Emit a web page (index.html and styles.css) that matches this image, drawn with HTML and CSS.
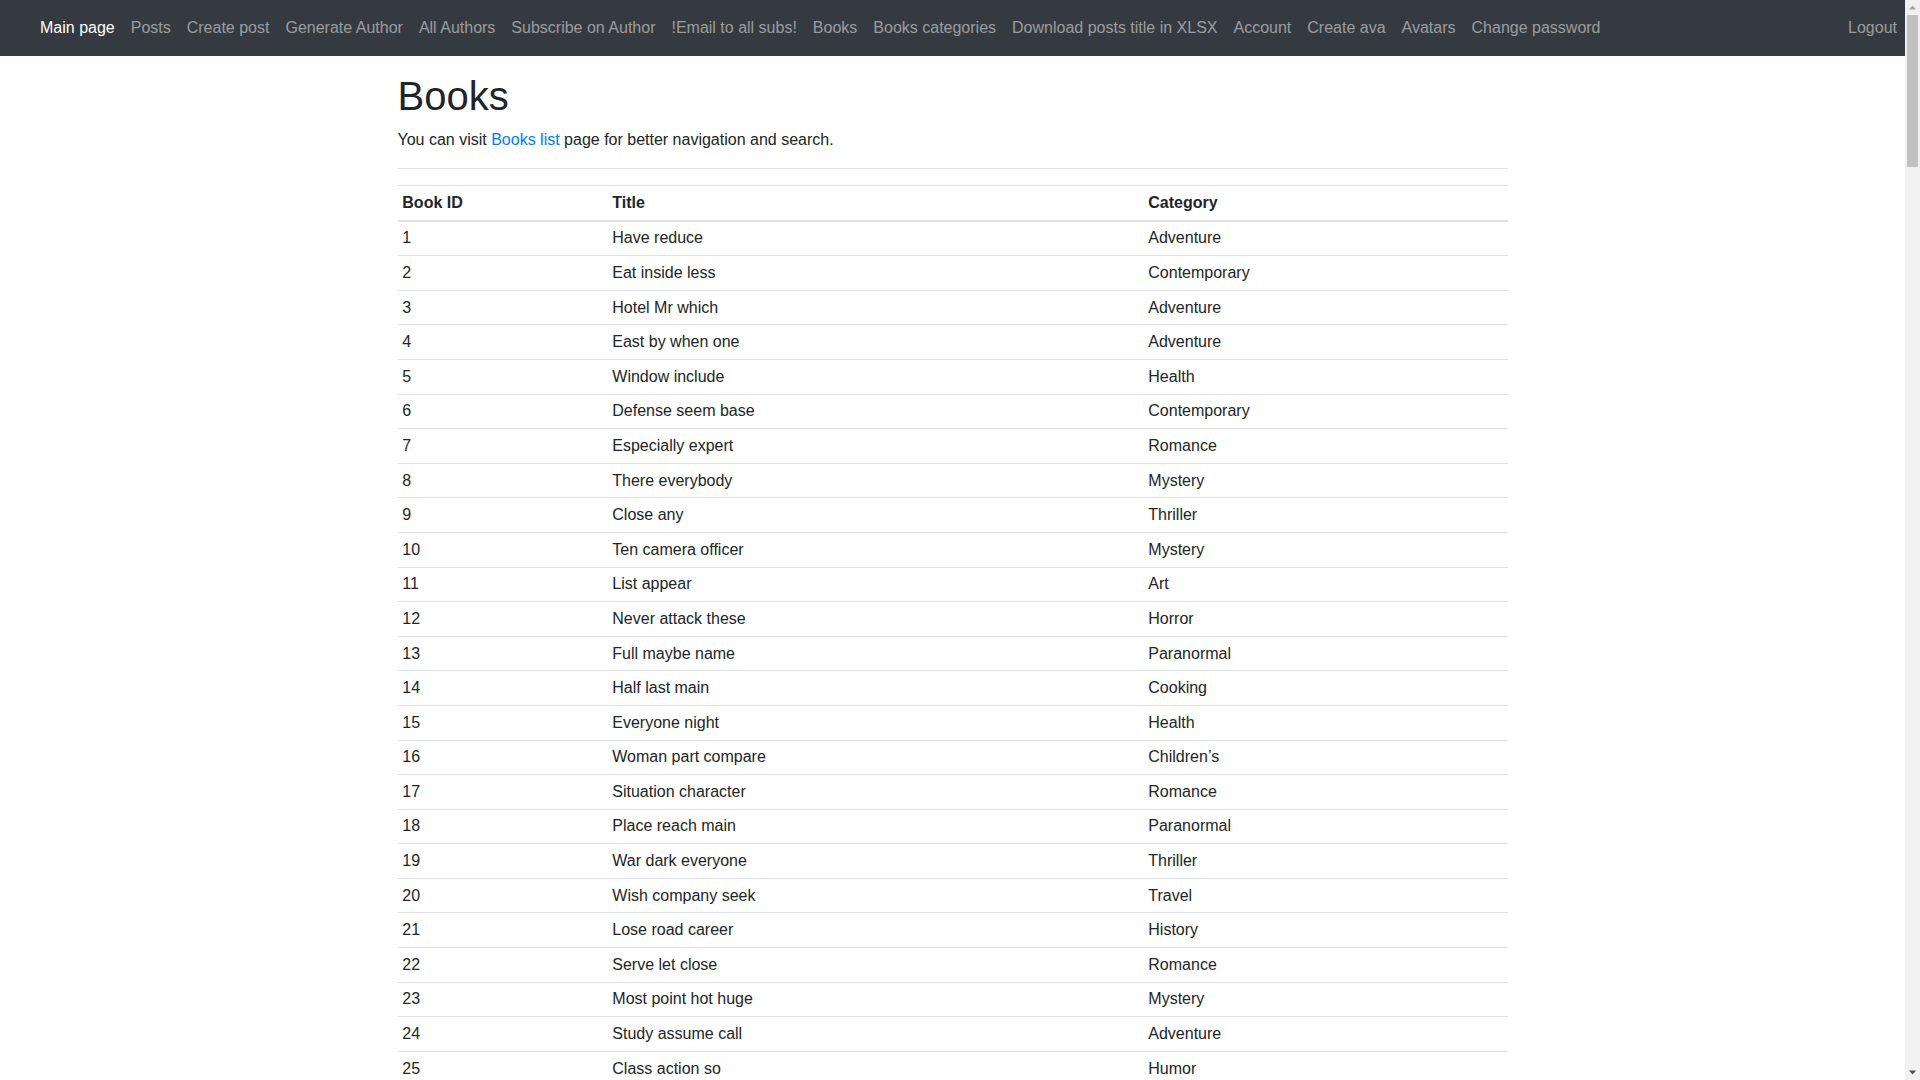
FILE: index.html
```html
<!DOCTYPE html>
<html lang="en">
<head>
<meta charset="utf-8">
<title>Books</title>
<link rel="stylesheet" href="styles.css">
</head>
<body>
<nav class="navbar">
  <ul class="nav-list">
    <li><a class="nav-link active" href="#">Main page</a></li>
    <li><a class="nav-link" href="#">Posts</a></li>
    <li><a class="nav-link" href="#">Create post</a></li>
    <li><a class="nav-link" href="#">Generate Author</a></li>
    <li><a class="nav-link" href="#">All Authors</a></li>
    <li><a class="nav-link" href="#">Subscribe on Author</a></li>
    <li><a class="nav-link" href="#">!Email to all subs!</a></li>
    <li><a class="nav-link" href="#">Books</a></li>
    <li><a class="nav-link" href="#">Books categories</a></li>
    <li><a class="nav-link" href="#">Download posts title in XLSX</a></li>
    <li><a class="nav-link" href="#">Account</a></li>
    <li><a class="nav-link" href="#">Create ava</a></li>
    <li><a class="nav-link" href="#">Avatars</a></li>
    <li><a class="nav-link" href="#">Change password</a></li>
  </ul>
  <ul class="nav-list nav-right">
    <li><a class="nav-link" href="#">Logout</a></li>
  </ul>
</nav>
<main class="container">
  <h1 class="title">Books</h1>
  <p class="lead-text">You can visit <a class="link" href="#">Books list</a> page for better navigation and search.</p>
  <hr class="divider">
  <table class="table">
    <thead>
      <tr><th class="col-id">Book ID</th><th class="col-title">Title</th><th>Category</th></tr>
    </thead>
    <tbody>
      <tr><td>1</td><td>Have reduce</td><td>Adventure</td></tr>
      <tr><td>2</td><td>Eat inside less</td><td>Contemporary</td></tr>
      <tr><td>3</td><td>Hotel Mr which</td><td>Adventure</td></tr>
      <tr><td>4</td><td>East by when one</td><td>Adventure</td></tr>
      <tr><td>5</td><td>Window include</td><td>Health</td></tr>
      <tr><td>6</td><td>Defense seem base</td><td>Contemporary</td></tr>
      <tr><td>7</td><td>Especially expert</td><td>Romance</td></tr>
      <tr><td>8</td><td>There everybody</td><td>Mystery</td></tr>
      <tr><td>9</td><td>Close any</td><td>Thriller</td></tr>
      <tr><td>10</td><td>Ten camera officer</td><td>Mystery</td></tr>
      <tr><td>11</td><td>List appear</td><td>Art</td></tr>
      <tr><td>12</td><td>Never attack these</td><td>Horror</td></tr>
      <tr><td>13</td><td>Full maybe name</td><td>Paranormal</td></tr>
      <tr><td>14</td><td>Half last main</td><td>Cooking</td></tr>
      <tr><td>15</td><td>Everyone night</td><td>Health</td></tr>
      <tr><td>16</td><td>Woman part compare</td><td>Children’s</td></tr>
      <tr><td>17</td><td>Situation character</td><td>Romance</td></tr>
      <tr><td>18</td><td>Place reach main</td><td>Paranormal</td></tr>
      <tr><td>19</td><td>War dark everyone</td><td>Thriller</td></tr>
      <tr><td>20</td><td>Wish company seek</td><td>Travel</td></tr>
      <tr><td>21</td><td>Lose road career</td><td>History</td></tr>
      <tr><td>22</td><td>Serve let close</td><td>Romance</td></tr>
      <tr><td>23</td><td>Most point hot huge</td><td>Mystery</td></tr>
      <tr><td>24</td><td>Study assume call</td><td>Adventure</td></tr>
      <tr><td>25</td><td>Class action so</td><td>Humor</td></tr>
    </tbody>
  </table>
</main>
<div class="scrollbar" aria-hidden="true">
  <div class="sb-button"><svg width="15" height="15" viewBox="0 0 15 15"><polygon points="4,9.5 11,9.5 7.5,5.5" fill="#a3a3a3"/></svg></div>
  <div class="sb-track"><div class="sb-thumb"></div></div>
  <div class="sb-button"><svg width="15" height="15" viewBox="0 0 15 15"><polygon points="4,5.5 11,5.5 7.5,9.5" fill="#505050"/></svg></div>
</div>
</body>
</html>
```

FILE: styles.css
```css
* { box-sizing: border-box; }
html, body { margin: 0; padding: 0; }
body {
  font-family: "Liberation Sans", Arial, sans-serif;
  font-size: 16px;
  line-height: 1.5;
  color: #212529;
  background: #fff;
  margin-right: 15px;
}
.scrollbar {
  position: fixed;
  top: 0;
  right: 0;
  width: 15px;
  height: 100vh;
  background: #f1f1f1;
  display: flex;
  flex-direction: column;
}
.sb-button { height: 15px; flex: none; }
.sb-button svg { display: block; }
.sb-track { flex: 1; padding: 0 2px; }
.sb-thumb { height: 152px; background: #c1c1c1; }
.navbar {
  display: flex;
  align-items: center;
  background: #343a40;
  padding: 8px 0 8px 32px;
  height: 56px;
}
.nav-list {
  display: flex;
  list-style: none;
  margin: 0;
  padding: 0;
}
.nav-right { margin-left: auto; }
.nav-link {
  display: block;
  padding: 8px 8px;
  color: rgba(255, 255, 255, 0.5);
  text-decoration: none;
}
.nav-link.active { color: #fff; }
.container {
  width: 1140px;
  margin: 16px auto 0;
  padding: 0 15px;
}
.title {
  font-size: 40px;
  font-weight: 500;
  line-height: 1.2;
  margin: 0 0 8px;
}
.lead-text { margin: 0 0 16px; }
.link { color: #007bff; text-decoration: none; }
.divider {
  border: 0;
  border-top: 1px solid rgba(0, 0, 0, 0.1);
  margin: 16px 0;
  height: 0;
}
.table {
  width: 100%;
  border-collapse: collapse;
  margin-bottom: 16px;
}
.table th, .table td {
  padding: 4.8px;
  text-align: left;
  vertical-align: top;
  border-top: 1px solid #dee2e6;
}
.table th { font-weight: 700; }
.table thead th { border-bottom: 2px solid #dee2e6; vertical-align: bottom; }
.col-id { width: 210px; }
.col-title { width: 536px; }
```
